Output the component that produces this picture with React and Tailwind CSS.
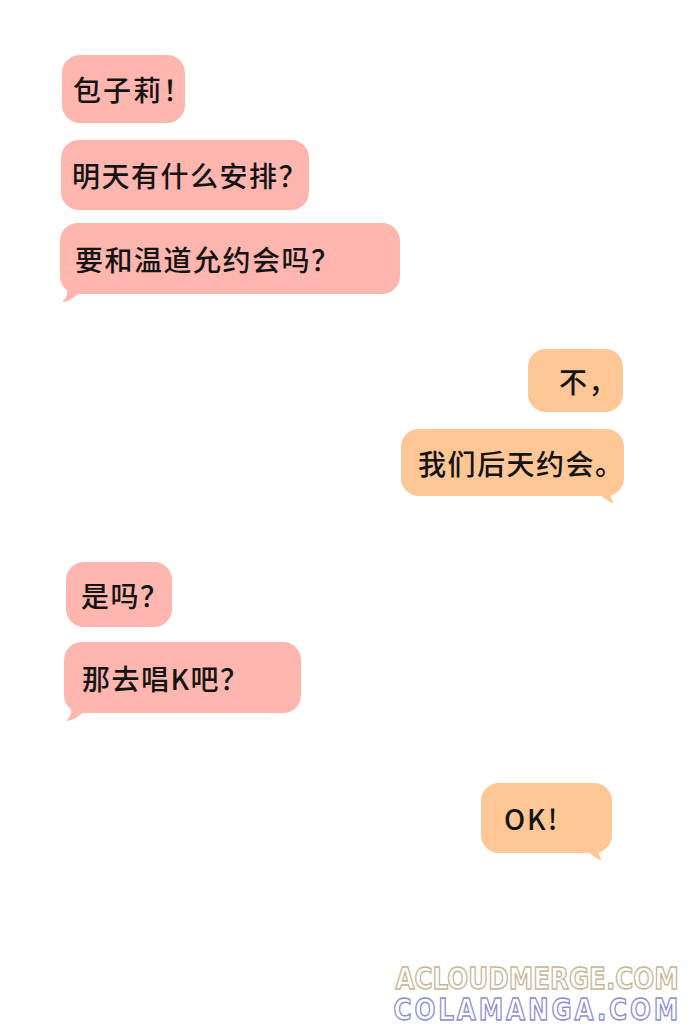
import React from "react";

const pinkBg = "bg-[#ffb6ae]";
const orangeBg = "bg-[#ffc696]";

function Tail({ side, color }) {
  if (side === "left") {
    return (
      <svg
        className="absolute left-[1px] bottom-[-9px]"
        width="24"
        height="14"
        viewBox="0 0 24 14"
      >
        <path d="M6 0 Q7 8 2 12 Q1 13 3 13 Q13 11 22 0 Z" fill={color} />
      </svg>
    );
  }
  return (
    <svg
      className="absolute right-[8px] bottom-[-9px]"
      width="22"
      height="14"
      viewBox="0 0 22 14"
    >
      <path d="M2 0 Q10 8 18 12 Q20 13 19 11 Q16 7 17 0 Z" fill={color} />
    </svg>
  );
}

function Bubble({ text, side, tail, className }) {
  const isLeft = side === "left";
  return (
    <div
      className={`relative flex items-center rounded-[18px] whitespace-nowrap text-[28px] font-medium tracking-[1.5px] text-[#141414] ${
        isLeft ? pinkBg : orangeBg
      } ${className}`}
    >
      {text}
      {tail && <Tail side={side} color={isLeft ? "#ffb6ae" : "#ffc696"} />}
    </div>
  );
}

export default function App() {
  return (
    <div
      className="w-[690px] h-[1032px] bg-white flex flex-col overflow-hidden"
      style={{ fontFamily: '"Noto Sans CJK SC", "Noto Sans", sans-serif' }}
    >
      <div className="pt-[55px] flex flex-col">
        <Bubble side="left" text="包子莉！" className="ml-[62px] w-[123px] h-[68px] pl-[11px] tracking-[2px]" />
        <Bubble side="left" text="明天有什么安排？" className="ml-[61px] mt-[17px] w-[248px] h-[70px] pl-[11px]" />
        <Bubble side="left" tail text="要和温道允约会吗？" className="ml-[60px] mt-[13px] w-[340px] h-[71px] pl-[15px]" />
      </div>

      <div className="flex flex-col items-end pr-[67px]">
        <Bubble side="right" text="不，" className="mt-[55px] w-[95px] h-[63px] pl-[31px]" />
        <Bubble side="right" tail text="我们后天约会。" className="mt-[17px] w-[223px] h-[67px] pl-[17px] -mr-[1px]" />
      </div>

      <div className="flex flex-col">
        <Bubble side="left" text="是吗？" className="ml-[66px] mt-[66px] w-[106px] h-[65px] pl-[15px]" />
        <Bubble side="left" tail text="那去唱K吧？" className="ml-[64px] mt-[15px] w-[237px] h-[71px] pl-[18px]" />
      </div>

      <div className="flex flex-col items-end pr-[78px]">
        <Bubble side="right" tail text="OK!" className="mt-[70px] w-[131px] h-[70px] pl-[23px] tracking-[2px]" />
      </div>

      <div
        className="mt-auto mb-[7px] mr-[11px] self-end flex flex-col items-end leading-[31px] text-[30px] font-bold origin-right scale-x-[0.82]"
        style={{ fontFamily: '"DejaVu Sans", sans-serif' }}
      >
        <div className="[-webkit-text-stroke:1.5px_#c8b594] text-white">ACLOUDMERGE.COM</div>
        <div className="[-webkit-text-stroke:1.5px_#8d8ed4] text-white tracking-[3.5px] -mr-[3px]">COLAMANGA.COM</div>
      </div>
    </div>
  );
}
